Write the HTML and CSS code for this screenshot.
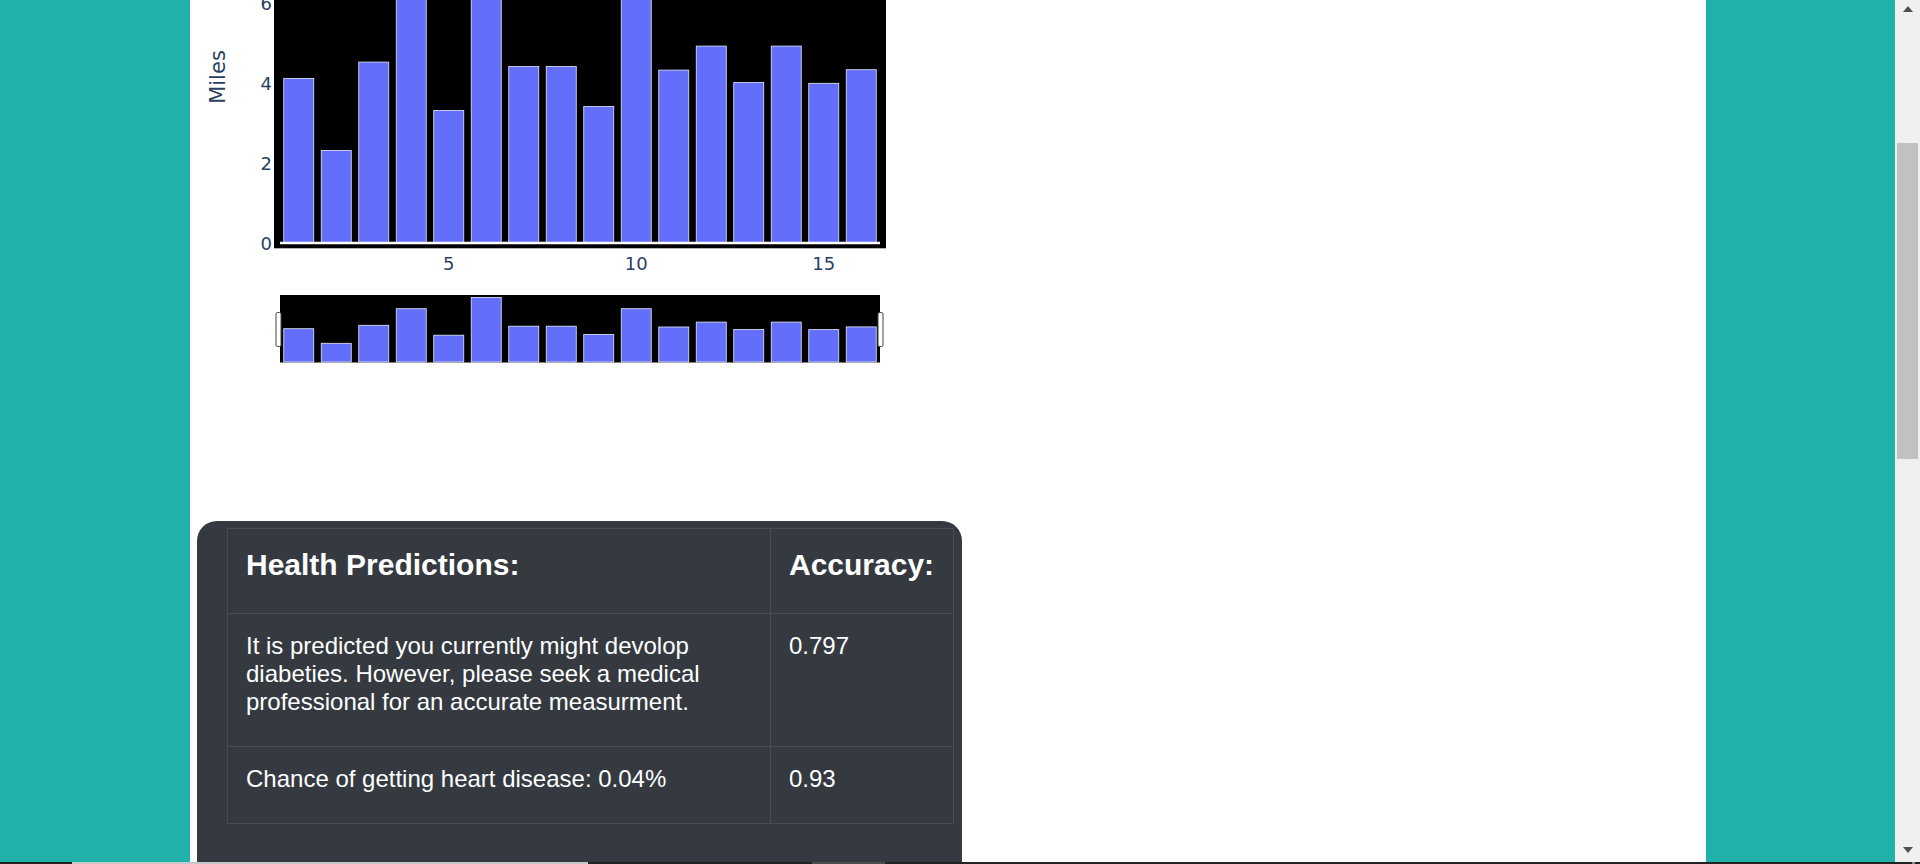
FILE: index.html
```html
<!DOCTYPE html>
<html lang="en">
<head>
<meta charset="utf-8">
<title>Health Dashboard</title>
<link rel="stylesheet" href="styles.css">
</head>
<body>
<div class="screen">
  <div class="viewport">
    <div class="gutter"></div>
    <main class="content">
      <svg class="chart" width="720" height="380" viewBox="0 0 720 380" xmlns="http://www.w3.org/2000/svg">
        <rect x="84" y="-30" width="612" height="278.3" fill="#000"/>
        <g class="bars" fill="#636efa" stroke="#e5ecf6" stroke-width="0.8">
          <rect x="93.75" y="78.5" width="30" height="164"/>
          <rect x="131.25" y="150.5" width="30" height="92"/>
          <rect x="168.75" y="62.1" width="30" height="180.4"/>
          <rect x="206.25" y="-19.5" width="30" height="262"/>
          <rect x="243.75" y="110.5" width="30" height="132"/>
          <rect x="281.25" y="-75.1" width="30" height="317.6"/>
          <rect x="318.75" y="66.5" width="30" height="176"/>
          <rect x="356.25" y="66.5" width="30" height="176"/>
          <rect x="393.75" y="106.5" width="30" height="136"/>
          <rect x="431.25" y="-19.5" width="30" height="262"/>
          <rect x="468.75" y="70.1" width="30" height="172.4"/>
          <rect x="506.25" y="46.1" width="30" height="196.4"/>
          <rect x="543.75" y="82.5" width="30" height="160"/>
          <rect x="581.25" y="46.1" width="30" height="196.4"/>
          <rect x="618.75" y="83.3" width="30" height="159.2"/>
          <rect x="656.25" y="69.7" width="30" height="172.8"/>
        </g>
        <line x1="90" y1="243" x2="690" y2="243" stroke="#fff" stroke-width="2.5"/>
        <g class="ticks" fill="#2a3f5f" font-family="DejaVu Sans, Verdana, sans-serif" font-size="18">
          <text x="82" y="249.5" text-anchor="end">0</text>
          <text x="82" y="169.5" text-anchor="end">2</text>
          <text x="82" y="89.5" text-anchor="end">4</text>
          <text x="82" y="9.5" text-anchor="end">6</text>
          <text x="258.75" y="269.5" text-anchor="middle">5</text>
          <text x="446.25" y="269.5" text-anchor="middle">10</text>
          <text x="633.75" y="269.5" text-anchor="middle">15</text>
        </g>
        <text class="axis-title" x="0" y="0" transform="translate(35 77) rotate(-90)" text-anchor="middle" fill="#2a3f5f" font-family="DejaVu Sans, Verdana, sans-serif" font-size="21">Miles</text>
        <rect x="90" y="295" width="600" height="67.5" fill="#000"/>
        <g class="mini-bars" fill="#636efa" stroke="#e5ecf6" stroke-width="0.8">
          <rect x="93.75" y="328.7" width="30" height="33.3"/>
          <rect x="131.25" y="343.3" width="30" height="18.7"/>
          <rect x="168.75" y="325.3" width="30" height="36.7"/>
          <rect x="206.25" y="308.7" width="30" height="53.3"/>
          <rect x="243.75" y="335.2" width="30" height="26.8"/>
          <rect x="281.25" y="297.4" width="30" height="64.6"/>
          <rect x="318.75" y="326.2" width="30" height="35.8"/>
          <rect x="356.25" y="326.2" width="30" height="35.8"/>
          <rect x="393.75" y="334.4" width="30" height="27.6"/>
          <rect x="431.25" y="308.7" width="30" height="53.3"/>
          <rect x="468.75" y="327" width="30" height="35"/>
          <rect x="506.25" y="322.1" width="30" height="39.9"/>
          <rect x="543.75" y="329.5" width="30" height="32.5"/>
          <rect x="581.25" y="322.1" width="30" height="39.9"/>
          <rect x="618.75" y="329.6" width="30" height="32.4"/>
          <rect x="656.25" y="326.9" width="30" height="35.1"/>
        </g>
        <rect x="86" y="312.5" width="5" height="34" rx="1.5" fill="#fff" stroke="#444" stroke-width="1"/>
        <rect x="688" y="312.5" width="5" height="34" rx="1.5" fill="#fff" stroke="#444" stroke-width="1"/>
      </svg>
      <section class="card">
        <table class="predictions">
          <colgroup>
            <col class="col-main">
            <col class="col-score">
          </colgroup>
          <thead>
            <tr>
              <th><h3 class="head-title">Health Predictions:</h3></th>
              <th><h3 class="head-title">Accuracy:</h3></th>
            </tr>
          </thead>
          <tbody>
            <tr>
              <td><p class="cell-text">It is predicted you currently might devolop diabeties. However, please seek a medical professional for an accurate measurment.</p></td>
              <td><p class="cell-text">0.797</p></td>
            </tr>
            <tr>
              <td><p class="cell-text">Chance of getting heart disease: 0.04%</p></td>
              <td><p class="cell-text">0.93</p></td>
            </tr>
          </tbody>
        </table>
      </section>
    </main>
    <div class="gutter gutter-right"></div>
    <div class="scrollbar">
      <div class="arrow arrow-up"></div>
      <div class="thumb"></div>
      <div class="arrow arrow-down"></div>
    </div>
  </div>
  <div class="taskbar">
    <div class="seg seg-light"></div>
    <div class="seg seg-mid"></div>
    <div class="seg seg-mark"></div>
  </div>
</div>
</body>
</html>
```

FILE: styles.css
```css
html, body {
  margin: 0;
  padding: 0;
  overflow: hidden;
  background: #20b2aa;
}

.screen {
  display: flex;
  flex-direction: column;
  width: 1920px;
  height: 864px;
}

.viewport {
  display: flex;
  height: 862px;
  overflow: hidden;
}

.gutter {
  flex: none;
  width: 190px;
  background: #20b2aa;
}

.gutter-right {
  width: 189px;
}

.content {
  flex: none;
  width: 1516px;
  background: #ffffff;
  overflow: hidden;
}

.chart {
  display: block;
  width: 720px;
  height: 380px;
  overflow: hidden;
}

.card {
  box-sizing: border-box;
  width: 765px;
  height: 420px;
  margin: 141px 0 0 7px;
  padding: 7px 8px 0 30px;
  background: #343a40;
  border-radius: 20px;
}

.predictions {
  width: 100%;
  border-collapse: collapse;
  table-layout: fixed;
  color: #ffffff;
  font-family: "Liberation Sans", Arial, sans-serif;
}

.col-main {
  width: 543px;
}

.predictions th,
.predictions td {
  border: 1px solid #454d55;
  padding: 18px;
  vertical-align: top;
  text-align: left;
}

.head-title {
  margin: 0 0 12px;
  font-size: 30px;
  font-weight: 700;
  line-height: 1.2;
}

.cell-text {
  margin: 0 0 12px;
  font-size: 24px;
  font-weight: 400;
  line-height: 28px;
}

.scrollbar {
  flex: none;
  width: 25px;
  display: flex;
  flex-direction: column;
  align-items: center;
  background: #f0f0f0;
}

.arrow {
  width: 0;
  height: 0;
  border-left: 5.5px solid transparent;
  border-right: 5.5px solid transparent;
}

.arrow-up {
  margin-top: 6px;
  border-bottom: 6px solid #505050;
}

.arrow-down {
  margin-top: auto;
  margin-bottom: 9px;
  border-top: 6px solid #505050;
}

.thumb {
  width: 21px;
  height: 316px;
  margin-top: 131px;
  background: #c1c1c1;
}

.taskbar {
  display: flex;
  height: 2px;
  background: #222222;
}

.seg {
  height: 2px;
}

.seg-light {
  width: 516px;
  margin-left: 72px;
  background: #c6c6c6;
}

.seg-mid {
  width: 73px;
  margin-left: 224px;
  background: #4c4c4c;
}

.seg-mark {
  width: 3px;
  margin-left: 1027px;
  background: #8a8a8a;
}
```
